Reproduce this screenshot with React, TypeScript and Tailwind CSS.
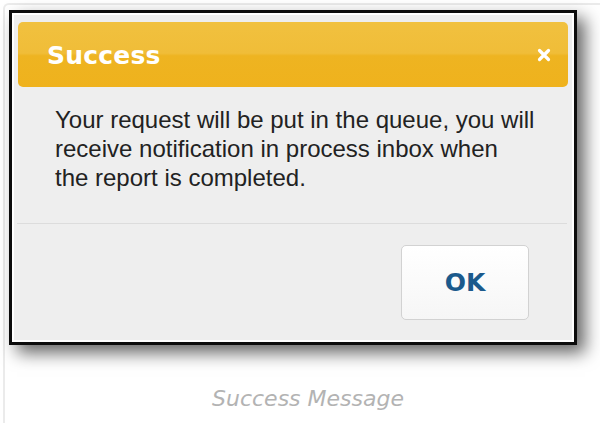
import React from 'react';

// Bold "×" used in the dialog title bar
const CloseIcon: React.FC = () => (
    <svg width="14" height="14" viewBox="0 0 14 14" className="block">
        <path d="M2.5 2.5 L11.5 11.5 M11.5 2.5 L2.5 11.5" stroke="#ffffff" strokeWidth="3.2" strokeLinecap="round" />
    </svg>
);

const SuccessDialog: React.FC = () => {
    return (
        <div className="w-[568px] h-[335px] border-[3px] border-[#0c0c0c] bg-white shadow-[8px_8px_16px_rgba(0,0,0,0.6)]">
            <div className="h-full border-2 border-white bg-[#eeeeee] flex flex-col">
                {/* title bar */}
                <div className="mx-[4px] mt-[7px] h-[65px] rounded-[5px] bg-[linear-gradient(to_bottom,#f1c13f_0%,#f0bd38_48%,#eeb421_52%,#efb21d_100%)] flex items-center justify-between pl-[29px] pr-[17px]">
                    <span className="text-white text-[25px] font-bold font-['DejaVu_Sans',sans-serif] leading-none tracking-[0.2px] translate-y-[1px]">
                        Success
                    </span>
                    <CloseIcon />
                </div>

                {/* message */}
                <p className="mt-[18px] pl-[41px] text-[24px] leading-[29px] text-[#222222] font-['Liberation_Sans',Arial,sans-serif]">
                    Your request will be put in the queue, you will
                    <br />
                    receive notification in process inbox when
                    <br />
                    the report is completed.
                </p>

                <div className="mt-[31px] ml-[3px] mr-[5px] h-px bg-[#dcdcdc]" />

                {/* actions */}
                <div className="flex justify-end pr-[43px] pt-[21px]">
                    <button className="w-[128px] h-[75px] rounded-[5px] border border-[#d2d2d2] bg-[linear-gradient(to_bottom,#ffffff,#f6f6f6)] text-[#1b5a8c] text-[25px] font-bold font-['DejaVu_Sans',sans-serif] leading-none">
                        OK
                    </button>
                </div>
            </div>
        </div>
    );
};

export default function App() {
    return (
        <div className="w-[600px] h-[423px] bg-white overflow-hidden">
            <div className="ml-[3px] mt-[3px] w-[640px] h-[460px] border-l-2 border-t-2 border-[#ebebeb] rounded-tl-[6px] pl-[4px] pt-[5px]">
                <SuccessDialog />
                <div className="w-[606px] -ml-[4px] mt-[41px] text-center text-[22px] leading-[26px] italic text-[#b3b3b3] font-['DejaVu_Sans',sans-serif]">
                    Success Message
                </div>
            </div>
        </div>
    );
}
